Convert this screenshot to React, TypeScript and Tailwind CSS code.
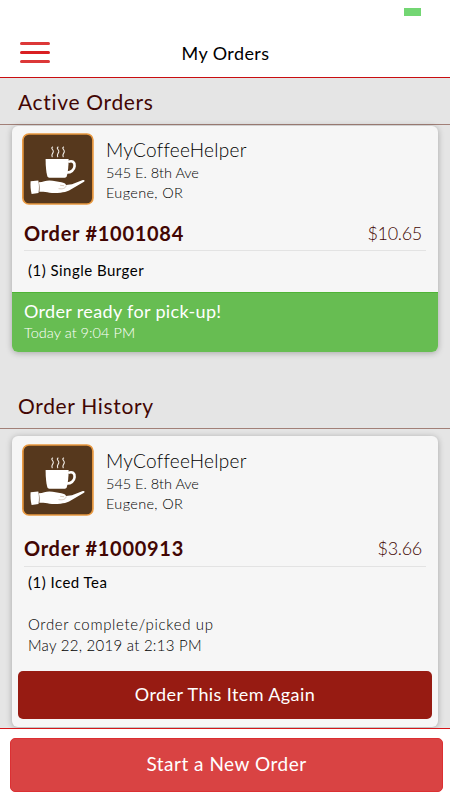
import type { ReactNode } from "react"

function CoffeeLogo() {
  return (
    <svg className="w-[72px] h-[72px] shrink-0" viewBox="0.4 0 72 72" fill="none">
      <rect x="1.300" y="1" width="70" height="70" rx="6" fill="#56381d" stroke="#e8983f" strokeWidth="1.700" />
      {/* Steam */}
      <g stroke="#f1ece6" strokeWidth="1.100" strokeLinecap="round">
        <path d="M31 14c-2.500 1.500 1.800 3 .6 5.200-.8 1.500-2 2.400-1 4.500" />
        <path d="M36.500 14c-2.500 1.500 1.800 3 .6 5.200-.8 1.500-2 2.400-1 4.500" />
        <path d="M42 14c-2.500 1.500 1.800 3 .6 5.200-.8 1.500-2 2.400-1 4.500" />
      </g>
      {/* Cup */}
      <path d="M24 26h23c0 6.500-.5 12.500-1.800 17.300-.3.900-1 1.400-2 1.400H27.700c-1 0-1.700-.5-2-1.400C24.500 38.500 24 32.500 24 26z" fill="#fff" />
      <path d="M46.500 28.900c4.500-1.800 6.800.3 6.500 4.200-.3 4-3.800 6.600-8 6.300" stroke="#fff" strokeWidth="2.600" />
      {/* Hand */}
      <path d="M9 48.200l7.700-.8c.9 4 .9 8.500.2 12.500l-6.900 1c-1-4-1.300-8.500-1-12.700z" fill="#fff" />
      <path d="M17.300 49.300c4-.2 7-1.900 10.500-1.900 4.500 0 8 1.300 12 1.800 2.500.4 4.400 1.400 4.600 2.800l6-.8 10.800-4.100c1.700-.4 2.400.8 1.200 1.700L47.500 57.600c-2.500 1.300-5.500 1.900-8.500 2.100-4 .3-7.500.5-11 0-3.800-.6-6.500-1.200-10.300-.9.500-3 .2-6.400-.4-9.500z" fill="#fff" />
      <path d="M37 55.600c3.500.6 7 .1 7.600-3.100M38.500 52.300l4 .4" stroke="#c8b5a2" strokeWidth=".7" />
    </svg>
  )
}

function SectionTitle({ children }: { children: ReactNode }) {
  return (
    <h2 className="h-[47px] shrink-0 border-b border-[#a28078] pl-[18px] pt-[10px] text-[21px] leading-[28px] tracking-[0.67px] text-[#420603]">
      {children}
    </h2>
  )
}

function StoreInfo() {
  return (
    <div className="flex pl-[10px] gap-[12px]">
      <CoffeeLogo />
      <div className="pt-[5px] font-light text-[14.5px] leading-[20px] text-black">
        <h3 className="text-[19px] leading-[24px] tracking-[0.27px]">MyCoffeeHelper</h3>
        <p className="mt-px tracking-[-0.03px]">545 E. 8th Ave</p>
        <p className="tracking-[0.33px]">Eugene, OR</p>
      </div>
    </div>
  )
}

function OrderLine({ id, price }: { id: string; price: string }) {
  return (
    <div className="mx-[12px] flex justify-between leading-[28px] text-[#420603]">
      <span className="text-[20px] font-bold tracking-[0.72px]">Order #{id}</span>
      <span className="pr-[4px] text-[18px] font-light tracking-[-0.3px]">{price}</span>
    </div>
  )
}

export default function App() {
  return (
    <div className="w-[450px] h-[800px] flex flex-col overflow-hidden bg-[#e5e5e5] font-['Lato',sans-serif]">
      <header className="relative h-[78px] shrink-0 bg-white border-b border-[#c90d10]">
        <div className="absolute left-[404px] top-[8px] w-[17px] h-[8px] bg-[#73d673]" />
        <button className="absolute left-[20px] top-[42px] flex flex-col gap-[6px]" aria-label="Menu">
          <span className="w-[30px] h-[3px] rounded-full bg-[#dc3838]" />
          <span className="w-[30px] h-[3px] rounded-full bg-[#d91f22]" />
          <span className="w-[30px] h-[3px] rounded-full bg-[#dc3838]" />
        </button>
        <h1 className="pt-[41px] pl-px text-center text-[18px] leading-[24px] tracking-[0.4px] text-black">My Orders</h1>
      </header>

      <main className="flex-1 flex flex-col overflow-hidden">
        <SectionTitle>Active Orders</SectionTitle>
        <section className="mx-[12px] mt-px h-[226px] shrink-0 pt-[7px] rounded-[6px] bg-[#f6f6f6] shadow-[0_1px_6px_rgba(0,0,0,0.28)] overflow-hidden">
          <StoreInfo />
          <div className="mt-[14px]">
            <OrderLine id="1001084" price="$10.65" />
          </div>
          <div className="mt-[3px] mx-[12px] h-px bg-[#e3e3e3]" />
          <p className="mt-[9px] ml-[16px] text-[15px] leading-[20px] tracking-[0.48px] text-black">(1) Single Burger</p>
          <div className="mt-[12px] h-[60px] bg-[#67bd52] border-t border-[#4fb336] pl-[12px] pt-[6px] text-white">
            <p className="text-[18px] leading-[24px] tracking-[0.34px]">Order ready for pick-up!</p>
            <p className="text-[14.5px] leading-[20px] tracking-[0.04px] font-light">Today at 9:04 PM</p>
          </div>
        </section>

        <div className="h-[30px] shrink-0" />
        <SectionTitle>Order History</SectionTitle>
        <section className="mx-[12px] mt-[7px] h-[291px] shrink-0 pt-[8px] rounded-[6px] bg-[#f6f6f6] shadow-[0_1px_6px_rgba(0,0,0,0.28)]">
          <StoreInfo />
          <div className="mt-[18px]">
            <OrderLine id="1000913" price="$3.66" />
          </div>
          <div className="mt-[4px] mx-[12px] h-px bg-[#e3e3e3]" />
          <p className="mt-[5px] ml-[16px] text-[15px] leading-[20px] tracking-[0.48px] text-black">(1) Iced Tea</p>
          <div className="mt-[22px] ml-[16px] text-[15px] leading-[21px] font-light text-black">
            <p className="tracking-[0.67px]">Order complete/picked up</p>
            <p className="tracking-[0.26px]">May 22, 2019 at 2:13 PM</p>
          </div>
          <button className="block mt-[15px] mx-[6px] w-[414px] h-[48px] pb-[2px] rounded-[5px] bg-[#971b12] text-[18px] tracking-[0.4px] text-white">
            Order This Item Again
          </button>
        </section>
      </main>

      <footer className="h-[72px] shrink-0 bg-white border-t border-[#d5161a] pt-[9px] pl-[10px] pr-[7px]">
        <button className="w-full h-[54px] pb-[2px] rounded-[5px] border border-[#dc3033] bg-[#d94343] text-[19px] tracking-[0.5px] text-white">
          Start a New Order
        </button>
      </footer>
    </div>
  )
}
